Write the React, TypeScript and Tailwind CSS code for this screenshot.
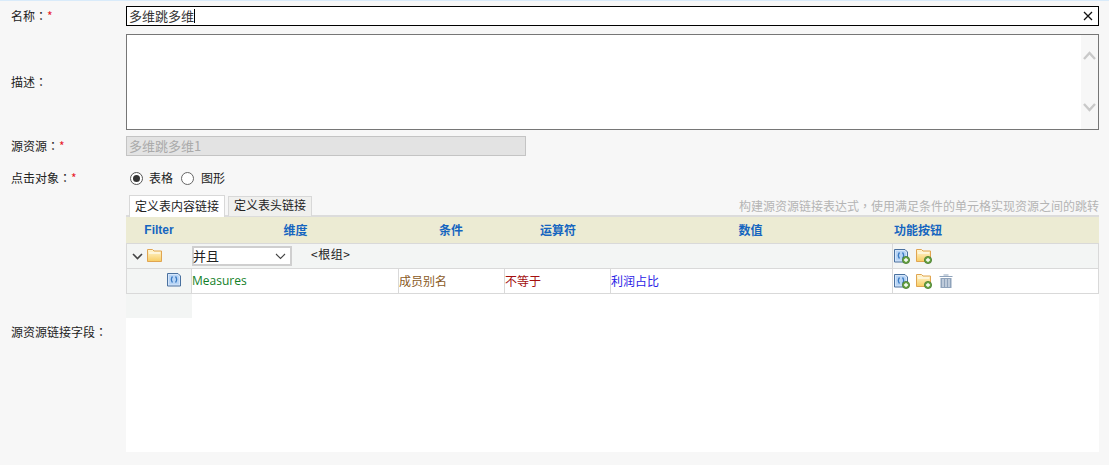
import React from "react";

const font = { fontFamily: '"Noto Sans CJK SC", sans-serif' };
const tc = { fontFamily: '"Noto Sans CJK TC", sans-serif' };

function Plus({ x = 8, y = 8 }: { x?: number; y?: number }) {
  return (
    <g transform={`translate(${x} ${y})`}>
      <circle cx="4" cy="4" r="3.6" fill="#6aa545" stroke="#44792c" strokeWidth="0.8" />
      <path d="M4 2v4M2 4h4" stroke="#fff" strokeWidth="1.3" />
    </g>
  );
}

function PageIcon({ plus = true }: { plus?: boolean }) {
  return (
    <svg width="16" height="16" viewBox="0 0 16 16" className="shrink-0">
      <path d="M0.5 1.5h10.5l2.5 2.5v10H0.5z" fill="#d5e6fa" stroke="#4a719f" />
      <path d="M2 3h8.5l1.5 1.5v8H2z" fill="#b7d4f5" />
      <path d="M5.5 4.5Q3.2 7.5 5.5 10.5M8.5 4.5Q10.8 7.5 8.5 10.5" stroke="#3a7ac2" strokeWidth="1.3" fill="none" />
      {plus && <Plus />}
    </svg>
  );
}

function FolderIcon({ plus = true }: { plus?: boolean }) {
  return (
    <svg width="16" height="16" viewBox="0 0 16 16" className="shrink-0">
      <defs>
        <linearGradient id="fg" x1="0" y1="0" x2="0" y2="1">
          <stop offset="0" stopColor="#fff8d8" />
          <stop offset="1" stopColor="#f8cd62" />
        </linearGradient>
      </defs>
      <path d="M0.5 1.5h5l1.5 1.5h7.5v10.5H0.5z" fill="url(#fg)" stroke="#e0a551" />
      <path d="M2 5h11" stroke="#fff" strokeWidth="1" />
      {plus && <Plus />}
    </svg>
  );
}

function TrashIcon() {
  return (
    <svg width="14" height="14" viewBox="0 0 14 14" className="shrink-0">
      <path d="M4.5 1h5M0.5 2.5h13" stroke="#8fa3bb" strokeWidth="1.2" />
      <path d="M1.5 4h11v10h-11z" fill="#8fa3bb" />
      <path d="M4 5v8M7 5v8M10 5v8" stroke="#dfe6ee" strokeWidth="1.2" />
    </svg>
  );
}

function Chevron({ up = false }: { up?: boolean }) {
  return (
    <svg width="13" height="9" viewBox="0 0 13 9">
      <path d={up ? "M1 8l5.5-6L12 8" : "M1 1l5.5 6L12 1"} stroke="#c9c9c9" strokeWidth="2.4" fill="none" />
    </svg>
  );
}

function Req() {
  return <span className="text-[#e8202a]">*</span>;
}

function Colon() {
  return <span style={tc}>：</span>;
}

function Label({ children }: { children: React.ReactNode }) {
  return <div className="w-[126px] shrink-0 pl-[11px] text-[12px] leading-[20px] text-[#222]">{children}</div>;
}

export default function App() {
  return (
    <div style={font} className="w-[1109px] h-[465px] overflow-hidden bg-[#f7f7f7] border-t border-[#d9ebfa] text-[12px] text-[#222]">
      <div className="flex h-[20px] mt-[5px]">
        <Label>名称<Colon /><Req /></Label>
        <div className="w-[973px] h-[20px] border border-black bg-white flex items-center pl-[2px] pr-[5px]">
          <span className="text-[13px] leading-[16px] text-[#333]">多维跳多维</span>
          <span className="w-px h-[14px] bg-black" />
          <span className="ml-auto">
            <svg width="10" height="10" viewBox="0 0 10 10"><path d="M1 1l8 8M9 1l-8 8" stroke="#111" strokeWidth="1.3" /></svg>
          </span>
        </div>
      </div>

      <div className="flex h-[96px] mt-[8px]">
        <div className="flex items-center"><Label>描述<Colon /></Label></div>
        <div className="w-[973px] h-[96px] border border-[#767676] bg-white flex justify-end">
          <div className="w-[17px] bg-[#f7f7f7] flex flex-col items-center justify-between pt-[16px] pb-[17px]">
            <Chevron up />
            <Chevron />
          </div>
        </div>
      </div>

      <div className="flex h-[20px] mt-[6px]">
        <Label>源资源<Colon /><Req /></Label>
        <div className="w-[400px] h-[20px] border border-[#c4c4c4] bg-[#e3e3e3] pl-[2px] text-[13px] leading-[18px] text-[#aaa]">多维跳多维1</div>
      </div>

      <div className="flex h-[20px] mt-[12px] items-center">
        <Label>点击对象<Colon /><Req /></Label>
        <div className="flex items-center pl-[4px]">
          <span className="w-[13px] h-[13px] rounded-full border border-[#555] bg-white flex items-center justify-center">
            <span className="w-[7px] h-[7px] rounded-full bg-[#333]" />
          </span>
          <span className="ml-[6px]">表格</span>
          <span className="ml-[8px] w-[13px] h-[13px] rounded-full border border-[#666] bg-white" />
          <span className="ml-[7px]">图形</span>
        </div>
      </div>

      <div className="flex mt-[5px]">
        <div className="w-[126px] shrink-0 pl-[11px] pt-[129px] leading-[20px]">源资源链接字段<Colon /></div>
        <div className="w-[973px]">
          <div className="h-[24px] flex items-end relative border-b-2 border-[#dcdcdc]">
            <div className="ml-[3px] w-[96px] h-[22px] border border-b-0 border-[#d8d8d8] bg-white text-center leading-[19px] -mb-[2px] text-[#222]">定义表内容链接</div>
            <div className="ml-[3px] w-[84px] h-[20px] border border-b-0 border-[#d8d8d8] bg-[#f0f0ee] text-center leading-[16px] -mb-[1px] text-[#222]">定义表头链接</div>
            <div className="ml-auto pb-[1px] leading-[16px] text-[#b4b4b4]">构建源资源链接表达式<span style={tc}>，</span>使用满足条件的单元格实现资源之间的跳转</div>
          </div>

          <div className="h-[235px] bg-white">
            <div className="grid grid-cols-[66px_207px_106px_106px_281px_207px]">
              <div className="col-span-6 grid grid-cols-subgrid h-[27px] bg-[#ecebd3] border-b border-[#d9d9d9] font-bold text-[#1565c0] items-center text-center">
                <div style={{ fontFamily: '"Liberation Sans", sans-serif' }}>Filter</div>
                <div>维度</div>
                <div className="pr-[2px]">条件</div>
                <div>运算符</div>
                <div className="pr-[2px]">数值</div>
                <div className="text-left pl-[2px]">功能按钮</div>
              </div>

              <div className="col-span-6 grid grid-cols-subgrid h-[25px] bg-[#f3f5f4] border-b border-[#d9d9d9]">
                <div className="flex items-center pl-[5px] gap-[4px] border-l border-[#d9d9d9]">
                  <svg width="11" height="7" viewBox="0 0 11 7"><path d="M1 1l4.5 4.5L10 1" stroke="#444" strokeWidth="1.6" fill="none" /></svg>
                  <FolderIcon plus={false} />
                </div>
                <div className="col-span-4 flex items-center">
                  <div className="w-[100px] h-[20px] border-2 border-[#cfcfcf] bg-white flex items-center justify-between pr-[4px] text-[13px]">
                    <span className="-ml-[1px]">并且</span>
                    <svg width="11" height="7" viewBox="0 0 11 7"><path d="M1 1l4.5 4.5L10 1" stroke="#444" strokeWidth="1.1" fill="none" /></svg>
                  </div>
                  <span className="ml-[19px] -mt-[5px] tracking-[0.5px]">&lt;根组&gt;</span>
                </div>
                <div className="flex items-center pl-[1px] gap-[6px] border-l border-r border-[#d9d9d9]">
                  <PageIcon />
                  <FolderIcon />
                </div>
              </div>

              <div className="col-span-6 grid grid-cols-subgrid h-[25px] border-b border-[#d9d9d9] items-stretch leading-[24px]">
                <div className="bg-[#f3f5f4] border-l border-r border-[#d9d9d9] flex items-center justify-end pr-[8px] pb-[2px]">
                  <PageIcon plus={false} />
                </div>
                <div className="text-[#128028] border-r border-[#d9d9d9]" style={{ fontFamily: '"Open Sans", sans-serif' }}>Measures</div>
                <div className="text-[#8a5a1e] border-r border-[#d9d9d9]">成员别名</div>
                <div className="text-[#a30f0f] border-r border-[#d9d9d9]">不等于</div>
                <div className="text-[#2a22e6]">利润占比</div>
                <div className="flex items-center pl-[1px] gap-[6px] border-l border-r border-[#d9d9d9]">
                  <PageIcon />
                  <FolderIcon />
                  <span className="ml-[1px]"><TrashIcon /></span>
                </div>
              </div>
            </div>
            <div className="w-[66px] h-[24px] bg-[#f3f5f4]" />
          </div>
        </div>
      </div>
    </div>
  );
}
